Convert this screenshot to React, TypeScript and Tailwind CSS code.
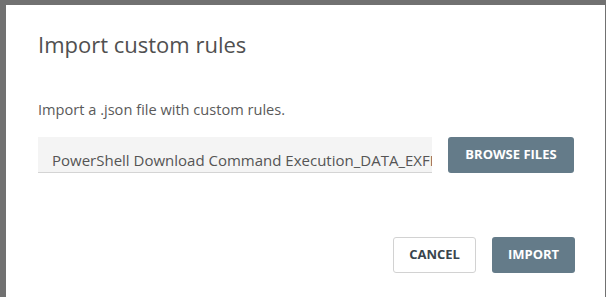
export default function App() {
  const font = { fontFamily: '"Open Sans", "Liberation Sans", sans-serif' };

  return (
    <div
      className="h-[297px] w-[606px] overflow-hidden bg-[#717171] pl-[6px] pt-[5px]"
      style={font}
    >
      <div className="h-[320px] w-[599px] bg-white pl-[32px] pr-[30px] pt-[24px]">
        <h2 className="text-[22px] leading-[30px] font-normal text-[#505050]">
          Import custom rules
        </h2>

        <p className="mt-[40px] text-[14.6px] leading-[20px] text-[#5a5a5a]">
          Import a .json file with custom rules.
        </p>

        <div className="mt-[18px] flex items-start gap-[16px]">
          <div className="h-[36px] w-[394px] overflow-hidden whitespace-nowrap border-b border-[#d4d4d4] bg-[#f4f4f4] px-[14px] pt-[13px] text-[15px] leading-[20px] text-[#555]">
            PowerShell Download Command Execution_DATA_EXFILTRATION.json
          </div>
          <button className="h-[36px] w-[126px] shrink-0 rounded-[3px] bg-[#647b89] text-[13px] font-bold text-white">
            BROWSE FILES
          </button>
        </div>

        <div className="mt-[64px] flex justify-end gap-[16px]">
          <button className="h-[36px] w-[83px] rounded-[3px] border border-[#d2d2d2] bg-white text-[13px] font-bold text-[#38444c]">
            CANCEL
          </button>
          <button className="h-[36px] w-[83px] rounded-[3px] bg-[#647b89] text-[13px] font-bold text-white">
            IMPORT
          </button>
        </div>
      </div>
    </div>
  );
}
